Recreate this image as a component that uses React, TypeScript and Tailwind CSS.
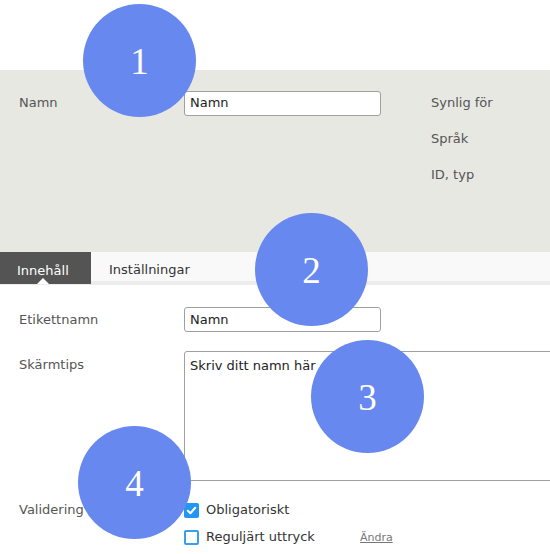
import React from "react";

const font = { fontFamily: '"DejaVu Sans", Verdana, sans-serif' };

function Circle({ n, cls }: { n: string; cls: string }) {
  return (
    <div
      className={`absolute w-[113px] h-[113px] rounded-full bg-[#6788ee] flex items-center justify-center text-white text-[37px] leading-none ${cls}`}
      style={{ fontFamily: '"Liberation Serif", "Times New Roman", serif' }}
    >
      <span className="mt-[2px]">{n}</span>
    </div>
  );
}

export default function App() {
  return (
    <div className="relative w-[550px] h-[554px] overflow-hidden bg-white text-[13px] text-[#555]" style={font}>
      <div className="h-[70px] bg-white" />
      <div className="h-[182px] bg-[#e8e8e3] pt-[15px] flex">
        <div className="w-[431px] shrink-0 flex items-start">
          <div className="h-[36px] flex items-center">
            <div className="w-[184px] shrink-0 pl-[19px]">Namn</div>
            <div className="w-[197px] h-[25px] border border-[#a0a0a0] rounded-[3px] bg-white flex items-center pl-[5px] text-[#222]">
              Namn
            </div>
          </div>
        </div>
        <div className="flex flex-col">
          <div className="h-[36px] flex items-center">Synlig för</div>
          <div className="h-[36px] flex items-center">Språk</div>
          <div className="h-[36px] flex items-center">ID, typ</div>
        </div>
      </div>
      <div className="h-[33px] bg-[#f9f9f9] border-b-[4px] border-[#ececec] flex">
        <div className="relative w-[91px] h-[32px] bg-[#545454] text-white pl-[17px] flex items-center pt-[6px]">
          Innehåll
          <div className="absolute left-[37px] bottom-0 w-0 h-0 border-l-[6px] border-r-[6px] border-b-[6px] border-l-transparent border-r-transparent border-b-white" />
        </div>
        <div className="pl-[18px] flex items-center pt-[6px] text-[#333]">Inställningar</div>
      </div>
      <div className="pt-[22px]">
        <div className="h-[25px] flex items-center">
          <div className="w-[184px] shrink-0 pl-[19px]">Etikettnamn</div>
          <div className="w-[197px] h-[25px] border border-[#a0a0a0] rounded-[3px] bg-white flex items-center pl-[5px] text-[#222]">
            Namn
          </div>
        </div>
        <div className="flex mt-[19px]">
          <div className="w-[184px] shrink-0 pl-[19px] pt-[4px]">Skärmtips</div>
          <div className="w-[400px] shrink-0 h-[130px] border border-[#a0a0a0] rounded-tl-[3px] bg-white pl-[5px] pt-[4px] text-[#222]">
            Skriv ditt namn här
          </div>
        </div>
        <div className="flex mt-[21px]">
          <div className="w-[184px] shrink-0 pl-[19px] h-[16px] flex items-center">Validering</div>
          <div className="flex flex-col gap-[11px]">
            <div className="h-[16px] flex items-center">
              <div className="w-[15px] h-[15px] shrink-0 rounded-[2px] bg-[#2196f3] flex items-center justify-center">
                <svg width="11" height="11" viewBox="0 0 12 12">
                  <path d="M2 6.2 L4.8 9 L10 3" fill="none" stroke="white" strokeWidth="2.2" strokeLinecap="round" strokeLinejoin="round" />
                </svg>
              </div>
              <span className="ml-[7px] text-[#333]">Obligatoriskt</span>
            </div>
            <div className="h-[16px] flex items-center">
              <div className="w-[15px] h-[15px] shrink-0 rounded-[2px] border-2 border-[#3a9eec] bg-white" />
              <span className="ml-[7px] text-[#333] w-[154px] shrink-0">Reguljärt uttryck</span>
              <span className="text-[11px] text-[#777] underline mt-[2px]">Ändra</span>
            </div>
          </div>
        </div>
      </div>
      <Circle n="1" cls="left-[83px] top-[4px]" />
      <Circle n="2" cls="left-[255px] top-[213px]" />
      <Circle n="3" cls="left-[311px] top-[340px]" />
      <Circle n="4" cls="left-[78px] top-[426px]" />
    </div>
  );
}
